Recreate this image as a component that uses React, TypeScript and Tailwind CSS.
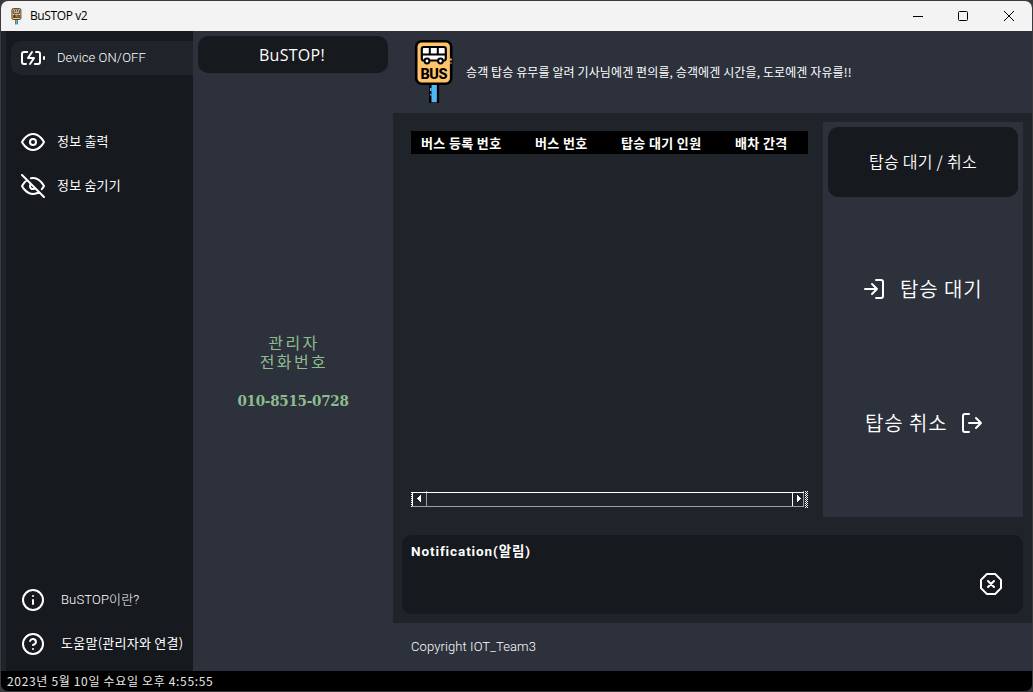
import React from "react";
import { FiEye } from "react-icons/fi";

function BusSign({ className }: { className: string }) {
  return (
    <svg className={className} viewBox="0 0 40 66" fill="none">
      <path d="M16.2 46V64M24 46V64" stroke="#000" strokeWidth="2.2" />
      <path d="M17.6 46H22.8V63H17.6Z" fill="#4cb8f5" />
      <path d="M16.8 49V52M16.8 55V56.5" stroke="#4cb8f5" strokeWidth="1.6" />
      <rect x="2.2" y="2.2" width="35" height="42.5" rx="5.5" fill="#ffc369" stroke="#000" strokeWidth="2.6" />
      <path d="M36.6 19.5V21.5M36.6 23.5V24.5" stroke="#ffc369" strokeWidth="2.2" />
      <rect x="7.8" y="8" width="24" height="13.5" rx="2" fill="#fff" stroke="#000" strokeWidth="2.2" />
      <path d="M8 15.5H32M15.8 8V15.5M23.8 8V15.5" stroke="#000" strokeWidth="2" />
      <circle cx="13" cy="22" r="2.4" fill="#fff" stroke="#000" strokeWidth="2" />
      <circle cx="26.5" cy="22" r="2.4" fill="#fff" stroke="#000" strokeWidth="2" />
      <text x="20" y="40" textAnchor="middle" textLength="27" lengthAdjust="spacing" fontFamily="Roboto, sans-serif" fontWeight="800" fontSize="14.5" fill="#000">BUS</text>
    </svg>
  );
}

function Glyph({ className, children }: { className: string; children: React.ReactNode }) {
  return (
    <svg className={className} viewBox="0 0 24 24" fill="none" stroke="currentColor" strokeWidth="2" strokeLinecap="round" strokeLinejoin="round">
      {children}
    </svg>
  );
}

export default function App() {
  return (
    <div className="flex h-[692px] w-[1033px] overflow-hidden bg-[#3b393b] p-px text-white [font-family:'Noto_Sans_CJK_KR',sans-serif] whitespace-nowrap">
      <div className="flex h-[690px] w-[1031px] flex-col overflow-hidden rounded-[7px] bg-[#1f232a]">
        <header className="flex h-[30px] shrink-0 items-center bg-[#f3f3f3] text-black">
          <BusSign className="ml-[9px] h-[17px] w-[13px]" />
          <span className="ml-[7px] text-[12px] tracking-[-0.4px] [font-family:'Open_Sans',sans-serif]">BuSTOP v2</span>
          <svg className="mr-[16px] ml-auto h-[12px] w-[104px]" viewBox="0 0 104 12" fill="none" stroke="#000">
            <path d="M1 6.5H11" />
            <rect x="46.5" y="1.5" width="9" height="9" rx="1" />
            <path d="M92 1L102 11M102 1L92 11" />
          </svg>
        </header>
        <div className="flex h-[640px] shrink-0">
          <aside className="ml-[5px] flex w-[187px] shrink-0 flex-col bg-[#16191d] text-[13px] leading-[20px] [font-family:Roboto,'Noto_Sans_CJK_KR',sans-serif]">
            <div className="mt-[10px] ml-[5px] flex h-[34px] items-center rounded-l-[10px] bg-[#1f232a] pl-[10px]">
              <Glyph className="size-6">
                <path d="M5 18H3a2 2 0 0 1-2-2V8a2 2 0 0 1 2-2h3.19M15 6h2a2 2 0 0 1 2 2v8a2 2 0 0 1-2 2h-3.19M23 13v-2" />
                <path d="M11 6l-4 6h6l-4 6" />
              </Glyph>
              <span className="ml-[12px] w-[90px] font-light tracking-[0.1px]">Device ON/OFF</span>
            </div>
            <div className="mt-[50px] flex h-[34px] items-center pl-[15px]">
              <FiEye className="size-6" />
              <span className="mb-[2px] ml-[12px] tracking-[0.2px] [font-family:'Noto_Sans_CJK_KR',sans-serif]">정보 출력</span>
            </div>
            <div className="mt-[10px] flex h-[34px] items-center pl-[15px]">
              <Glyph className="size-6">
                <path d="M17.94 17.94A10.07 10.07 0 0 1 12 20c-7 0-11-8-11-8a18.45 18.45 0 0 1 5.06-5.94M9.9 4.24A9.12 9.12 0 0 1 12 4c7 0 11 8 11 8a18.5 18.5 0 0 1-2.16 3.19m-6.72-1.07a3 3 0 1 1-4.24-4.24M1 1l22 22" />
              </Glyph>
              <span className="mb-[2px] ml-[12px] tracking-[0.2px] [font-family:'Noto_Sans_CJK_KR',sans-serif]">정보 숨기기</span>
            </div>
            <div className="mt-auto flex h-[34px] items-center pl-[15px]">
              <Glyph className="size-6"><circle cx="12" cy="12" r="10" /><path d="M12 16v-4M12 8h.01" /></Glyph>
              <span className="ml-[16px] font-light tracking-[0.15px]">BuSTOP이란?</span>
            </div>
            <div className="mt-[10px] mb-[10px] flex h-[34px] items-center pl-[15px]">
              <Glyph className="size-6"><circle cx="12" cy="12" r="10" /><path d="M9.09 9a3 3 0 0 1 5.83 1c0 2-3 3-3 3M12 17h.01" /></Glyph>
              <span className="mb-[2px] ml-[16px] tracking-[0.25px] [font-family:'Noto_Sans_CJK_KR',sans-serif]">도움말(관리자와 연결)</span>
            </div>
          </aside>
          <section className="flex w-[200px] shrink-0 flex-col items-center bg-[#2c313c]">
            <div className="mt-[5px] flex h-[37px] w-[190px] items-center justify-center rounded-[10px] bg-[#16191d] pr-[2px] text-[16px] font-medium tracking-[0.3px] [font-family:'Open_Sans',sans-serif]">BuSTOP!</div>
            <div className="mt-[260px] flex flex-col items-center pl-[2px] text-[16px] leading-[19px] tracking-[2.4px] text-[#8fbc8f]">
              <span>관리자</span>
              <span>전화번호</span>
            </div>
            <div className="mt-[18px] text-[15px] leading-[24px] font-bold tracking-[-0.25px] text-[#8fbc8f] [font-family:'DejaVu_Serif_Condensed','DejaVu_Serif',serif]">010-8515-0728</div>
          </section>
          <main className="flex w-[639px] shrink-0 flex-col bg-[#1f232a]">
            <div className="flex h-[82px] shrink-0 items-center bg-[#2c313c] pl-[21px]">
              <BusSign className="h-[66px] w-[40px]" />
              <span className="ml-[12px] text-[12px] tracking-[0.11px]">승객 탑승 유무를 알려 기사님에겐 편의를, 승객에겐 시간을, 도로에겐 자유를!!</span>
            </div>
            <div className="flex h-[422px] shrink-0 pl-[18px]">
              <div className="mt-[18px] flex h-[377px] w-[397px] flex-col">
                <div className="flex h-[23px] items-center bg-black pl-[10px] text-[13px] font-bold tracking-[0.35px]">
                  <span className="w-[114px]">버스 등록 번호</span>
                  <span className="w-[86px]">버스 번호</span>
                  <span className="w-[114px]">탑승 대기 인원</span>
                  <span>배차 간격</span>
                </div>
                <svg className="mt-auto h-[17px] w-[397px]" viewBox="0 0 397 17" shapeRendering="crispEdges">
                  <path d="M0 15.5H393M392.5 0V16" stroke="#a09f9c" />
                  <path d="M15.5 0V15" stroke="#a09f9c" />
                  <path d="M0 1.5H393M1.5 1V15M381.5 1V15" stroke="#fff" />
                  <path d="M0.5 1V17" stroke="#fff" strokeDasharray="1 1" />
                  <path d="M394.5 0V17M396.5 0V17" stroke="#fff" strokeDasharray="1 1" />
                  <path d="M395.5 1V17" stroke="#fff" strokeDasharray="1 1" />
                  <path d="M10 4V11L6 7.5ZM386 4V11L390 7.5Z" fill="#fff" />
                </svg>
              </div>
              <div className="mt-[9px] ml-[15px] flex h-[395px] w-[200px] flex-col bg-[#2c313c]">
                <div className="mt-[5px] ml-[5px] flex h-[70px] w-[190px] items-center justify-center rounded-[10px] bg-[#16191d] pb-[2px] text-[16px] font-[350] tracking-[0.25px]">탑승 대기 / 취소</div>
                <div className="mt-[76px] flex h-[32px] items-center pl-[39px]">
                  <Glyph className="size-6"><path d="M14 3h5a2 2 0 0 1 2 2v14a2 2 0 0 1-2 2h-5M10 17l5-5-5-5M15 12H3" /></Glyph>
                  <span className="ml-[14px] text-[20px] font-[350] tracking-[0.9px]">탑승 대기</span>
                </div>
                <div className="mt-[102px] flex h-[32px] items-center pl-[42px]">
                  <span className="w-[95px] text-[20px] font-[350] tracking-[0.9px]">탑승 취소</span>
                  <Glyph className="size-6"><path d="M9 21H5a2 2 0 0 1-2-2V5a2 2 0 0 1 2-2h4M16 17l5-5-5-5M21 12H9" /></Glyph>
                </div>
              </div>
            </div>
            <div className="ml-[9px] flex h-[79px] w-[621px] shrink-0 items-start rounded-[10px] bg-[#16191d]">
              <span className="mt-[6px] ml-[9px] text-[13.5px] leading-[20px] font-bold tracking-[0.9px] [font-family:Roboto,'Noto_Sans_CJK_KR',sans-serif]">Notification(알림)</span>
              <Glyph className="mt-[37px] mr-[20px] ml-auto size-6"><path d="M7.86 2h8.28L22 7.86v8.28L16.14 22H7.86L2 16.14V7.86L7.86 2zM15 9l-6 6M9 9l6 6" /></Glyph>
            </div>
            <footer className="mt-[9px] flex h-[48px] items-center bg-[#2c313c] pl-[18px] text-[13px] font-light tracking-[0.1px] [font-family:Roboto,sans-serif]">Copyright IOT_Team3</footer>
          </main>
        </div>
        <div className="flex h-[20px] shrink-0 items-center bg-black pl-[6px] text-[12px] tracking-[0.67px] text-[#e6e6e6]">2023년 5월 10일 수요일 오후 4:55:55</div>
      </div>
    </div>
  );
}
